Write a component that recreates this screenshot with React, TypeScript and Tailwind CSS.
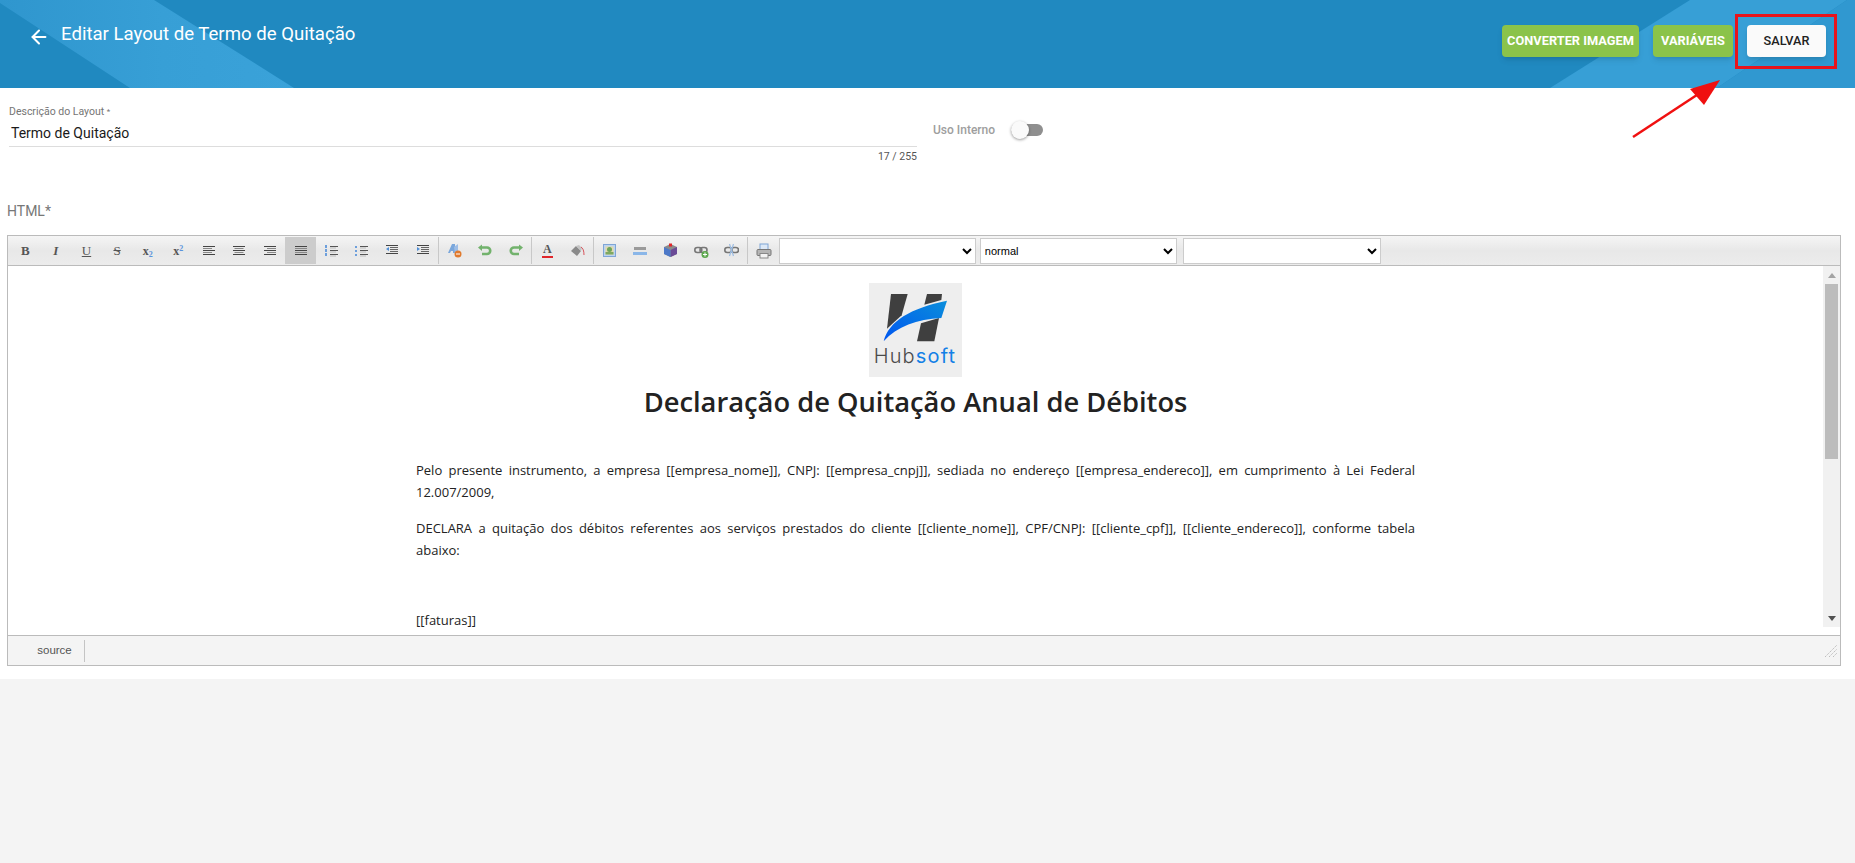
import { ArrowLeft } from 'lucide-react';

function HeaderShapes() {
  return (
    <svg className="absolute inset-0 h-full w-full" viewBox="0 0 1855 88" preserveAspectRatio="none">
      <defs>
        <linearGradient id="bandLeft" x1="0" x2="1" y1="0" y2="0">
          <stop offset="0" stopColor="#2f96ce" />
          <stop offset="0.55" stopColor="#379fd6" />
          <stop offset="1" stopColor="#3aa2d9" />
        </linearGradient>
      </defs>
      <polygon points="0,3 130,88 294,88 154,0 0,0" fill="url(#bandLeft)" />
      <polygon points="1690,0 1550,88 1717,88 1847,0" fill="#379fd6" />
      <polygon points="1847,0 1717,88 1855,88 1855,0" fill="#3098d0" />
    </svg>
  );
}

function Line({ w, x = 0, y, c = '#555' }: { w: number; x?: number; y: number; c?: string }) {
  return <rect x={x} y={y} width={w} height="1" fill={c} />;
}

function AlignIcon({ kind }: { kind: 'left' | 'center' | 'right' | 'justify' }) {
  const rows = [12, 9, 12, 9, 12];
  return (
    <svg width="12" height="10" viewBox="0 0 12 10">
      {rows.map((w, i) => {
        const width = kind === 'justify' ? 12 : w;
        const x = kind === 'left' || kind === 'justify' ? 0 : kind === 'center' ? (12 - width) / 2 : 12 - width;
        return <Line key={i} w={width} x={x} y={i * 2} c={i % 2 ? '#888' : '#444'} />;
      })}
    </svg>
  );
}

function ListIcon({ ordered }: { ordered?: boolean }) {
  return (
    <svg width="13" height="12" viewBox="0 0 13 12">
      {[1, 5, 9].map(y => (
        <g key={y}>
          <rect x="0" y={y - (ordered ? 1 : 0)} width="2" height={ordered ? 3 : 2} fill="#6d9fdc" />
          <Line w={8} x={5} y={y} c="#555" />
          <Line w={6} x={5} y={y + 1.5} c="#bbb" />
        </g>
      ))}
    </svg>
  );
}

function IndentIcon({ out }: { out?: boolean }) {
  return (
    <svg width="12" height="11" viewBox="0 0 12 11">
      <Line w={12} y={0} c="#444" />
      <Line w={8} x={4} y={2} c="#666" />
      <Line w={8} x={4} y={4} c="#666" />
      <Line w={8} x={4} y={6} c="#666" />
      <Line w={12} y={8} c="#444" />
      <polygon points={out ? '3,2 0,4 3,6' : '0,2 3,4 0,6'} fill="#4f8fd8" />
    </svg>
  );
}

function ClearFormatIcon() {
  return (
    <svg width="15" height="15" viewBox="0 0 15 15">
      <polygon points="1,10 5,1 8,1 8,10 6,10 6,8 4,8 3,10" fill="#7aa7dc" />
      <polygon points="7,4 11,1 11,11 8,11" fill="#9dbde6" />
      <circle cx="11" cy="11" r="3.5" fill="#e07a2e" />
      <rect x="9" y="10.5" width="4" height="1" fill="#fff" />
    </svg>
  );
}

function UndoIcon({ redo }: { redo?: boolean }) {
  return (
    <svg width="14" height="13" viewBox="0 0 14 13" className={redo ? '-scale-x-100' : ''}>
      <path d="M2 3.5h7a3 3 0 0 1 0 6.5H4" fill="none" stroke="#72b26c" strokeWidth="2.6" />
      <polygon points="4,0.5 4,7 0,3.5" fill="#72b26c" />
    </svg>
  );
}

function FontColorIcon() {
  return (
    <span className="flex h-[15px] w-[12px] flex-col items-center">
      <span className="font-['Liberation_Serif',serif] text-[12px] leading-[12px] font-bold text-[#555]">A</span>
      <span className="mt-px h-[2px] w-[11px] bg-[#e0262b]" />
    </span>
  );
}

function BgColorIcon() {
  return (
    <svg width="15" height="14" viewBox="0 0 15 14">
      <polygon points="1,7 6,2 11,7 7,12" fill="#8a8a8a" />
      <polygon points="6,2 9,1 12,4 11,7" fill="#c4c4c4" />
      <path d="M11 3c2 1 3 4 3 8" fill="none" stroke="#d8525a" strokeWidth="1" />
    </svg>
  );
}

function ImageIcon() {
  return (
    <svg width="13" height="13" viewBox="0 0 13 13">
      <rect x="0.5" y="0.5" width="12" height="12" fill="#bcd4f0" stroke="#7fa5d6" />
      <rect x="2.5" y="2.5" width="8" height="8" fill="#e3d9a8" />
      <circle cx="6.5" cy="5.5" r="2.5" fill="#6da45b" />
      <rect x="2.5" y="8" width="8" height="2.5" fill="#7fa860" />
    </svg>
  );
}

function RuleIcon() {
  return (
    <svg width="14" height="10" viewBox="0 0 14 10">
      <rect x="1" y="1" width="12" height="3" fill="#9a9a9a" />
      <rect x="0" y="6" width="14" height="3" fill="#8ab6e8" />
    </svg>
  );
}

function MediaIcon() {
  return (
    <svg width="15" height="15" viewBox="0 0 15 15">
      <polygon points="7.5,1 14,4 14,11 7.5,14 1,11 1,4" fill="#8b8b8b" />
      <polygon points="7.5,7 14,4 14,11 7.5,14" fill="#6a4a96" />
      <polygon points="1,4 7.5,7 7.5,14 1,11" fill="#4c78c8" />
      <rect x="6" y="0.5" width="3" height="3" fill="#e0262b" />
    </svg>
  );
}

function LinkIcon({ broken }: { broken?: boolean }) {
  return (
    <svg width="15" height="14" viewBox="0 0 15 14">
      <rect x="0.8" y="3.5" width="7" height="5" rx="2.5" fill="none" stroke="#777" strokeWidth="1.6" />
      <rect x={broken ? 7.5 : 6} y="3.5" width="7" height="5" rx="2.5" fill="none" stroke="#777" strokeWidth="1.6" />
      {broken ? (
        <path d="M5.5 0l4 12M9.5 0l-4 12" stroke="#9cbde4" strokeWidth="1.2" />
      ) : (
        <>
          <circle cx="11" cy="10.5" r="3.5" fill="#5da84e" />
          <path d="M9 10.5h4M11 8.5v4" stroke="#fff" strokeWidth="1" />
        </>
      )}
    </svg>
  );
}

function PrintIcon() {
  return (
    <svg width="16" height="16" viewBox="0 0 16 16">
      <rect x="4" y="1" width="8" height="6" fill="#dce8f6" stroke="#7fa5d6" />
      <rect x="1" y="6.5" width="14" height="6" rx="1" fill="#b5b5b5" stroke="#777" />
      <rect x="4" y="10.5" width="8" height="4.5" fill="#f3f3f3" stroke="#888" />
    </svg>
  );
}

function TextBtn({ className, children }: { className: string; children: React.ReactNode }) {
  return <span className={`font-['Liberation_Serif',serif] leading-none text-[#555] ${className}`}>{children}</span>;
}

function ToolBtn({ children, active }: { children: React.ReactNode; active?: boolean }) {
  return (
    <span className={`flex h-[27px] w-[30.6px] shrink-0 items-center justify-center ${active ? 'bg-[#cccccc]' : ''}`}>
      {children}
    </span>
  );
}

function Sep() {
  return <span className="h-[27px] w-px shrink-0 bg-[#c8c8c8]" />;
}

function ToolSelect({ width, value }: { width: string; value?: string }) {
  return (
    <select
      defaultValue={value ?? ''}
      className={`h-[26px] ${width} border border-[#cccccc] bg-white font-['Liberation_Sans',sans-serif] text-[11px] text-black`}
    >
      <option value="">{''}</option>
      <option value="normal">normal</option>
    </select>
  );
}

function Toolbar() {
  return (
    <div className="flex h-[30px] items-center border-b border-[#bbbbbb] bg-gradient-to-b from-[#f5f5f5] via-[#e8e8e8] to-[#ececec] pl-[2px]">
      <ToolBtn><TextBtn className="text-[13px] font-bold">B</TextBtn></ToolBtn>
      <ToolBtn><TextBtn className="text-[13px] font-bold italic">I</TextBtn></ToolBtn>
      <ToolBtn><TextBtn className="text-[13px] underline">U</TextBtn></ToolBtn>
      <ToolBtn><TextBtn className="text-[13px] line-through">S</TextBtn></ToolBtn>
      <ToolBtn>
        <TextBtn className="text-[12px] font-bold">x<sub className="text-[8px] text-[#5b93dc]">2</sub></TextBtn>
      </ToolBtn>
      <ToolBtn>
        <TextBtn className="text-[12px] font-bold">x<sup className="text-[8px] text-[#5b93dc]">2</sup></TextBtn>
      </ToolBtn>
      <ToolBtn><AlignIcon kind="left" /></ToolBtn>
      <ToolBtn><AlignIcon kind="center" /></ToolBtn>
      <ToolBtn><AlignIcon kind="right" /></ToolBtn>
      <ToolBtn active><AlignIcon kind="justify" /></ToolBtn>
      <ToolBtn><ListIcon ordered /></ToolBtn>
      <ToolBtn><ListIcon /></ToolBtn>
      <ToolBtn><IndentIcon out /></ToolBtn>
      <ToolBtn><IndentIcon /></ToolBtn>
      <Sep />
      <ToolBtn><ClearFormatIcon /></ToolBtn>
      <ToolBtn><UndoIcon /></ToolBtn>
      <ToolBtn><UndoIcon redo /></ToolBtn>
      <Sep />
      <ToolBtn><FontColorIcon /></ToolBtn>
      <ToolBtn><BgColorIcon /></ToolBtn>
      <Sep />
      <ToolBtn><ImageIcon /></ToolBtn>
      <ToolBtn><RuleIcon /></ToolBtn>
      <ToolBtn><MediaIcon /></ToolBtn>
      <ToolBtn><LinkIcon /></ToolBtn>
      <ToolBtn><LinkIcon broken /></ToolBtn>
      <Sep />
      <ToolBtn><PrintIcon /></ToolBtn>
      <div className="flex items-center gap-[4px]">
        <ToolSelect width="w-[197px]" />
        <ToolSelect width="w-[197px]" value="normal" />
        <ToolSelect width="ml-[2px] w-[198px]" />
      </div>
    </div>
  );
}

function Logo() {
  return (
    <svg width="93" height="94" viewBox="27 15 277 282" className="ml-[861px] block bg-[#eeeeee]">
      <defs>
        <linearGradient id="hubBlue" x1="0" x2="1" y1="1" y2="0">
          <stop offset="0" stopColor="#0056f0" />
          <stop offset="1" stopColor="#0a8edb" />
        </linearGradient>
      </defs>
      <polygon points="92,48 142,48 124,112 80,152" fill="#3f3f3f" />
      <polygon points="200,48 245,48 243,66 192,80" fill="#3f3f3f" />
      <polygon points="182,136 236,120 222,190 170,190" fill="#3f3f3f" />
      <path d="M70 190C85 130 150 90 260 68L243 120C170 124 110 145 70 190Z" fill="url(#hubBlue)" />
      <text x="40" y="255" fontFamily="Inter, sans-serif" fontSize="60" letterSpacing="3.5" fill="#4a4a4a" fontWeight="300">
        Hub<tspan fill="#1480e6" fontWeight="400">soft</tspan>
      </text>
    </svg>
  );
}

function Scrollbar() {
  return (
    <div className="flex h-[361px] w-[17px] shrink-0 flex-col items-center bg-[#f1f1f1]">
      <div className="flex h-[18px] items-center justify-center">
        <svg width="8" height="5" viewBox="0 0 8 5"><polygon points="4,0 8,5 0,5" fill="#a3a3a3" /></svg>
      </div>
      <div className="h-[175px] w-[13px] bg-[#bcbcbc]" />
      <div className="flex-1" />
      <div className="flex h-[18px] items-center justify-center">
        <svg width="8" height="5" viewBox="0 0 8 5"><polygon points="0,0 8,0 4,5" fill="#505050" /></svg>
      </div>
    </div>
  );
}

function Editor() {
  return (
    <div className="mx-[7px] w-[1834px] border border-[#bbbbbb] bg-white">
      <Toolbar />
      <div className="flex h-[370px] overflow-hidden border-b border-[#bbbbbb]">
        <div className="min-w-0 flex-1 overflow-hidden pt-[17px] font-['Open_Sans',sans-serif] text-[#222]">
          <Logo />
          <h1 className="mt-[6px] text-center text-[27.3px] leading-[38px] font-semibold">
            Declaração de Quitação Anual de Débitos
          </h1>
          <div className="mt-[38px] ml-[408px] w-[999px] text-justify text-[13px] leading-[22px]">
            <p>
              Pelo presente instrumento, a empresa [[empresa_nome]], CNPJ: [[empresa_cnpj]], sediada no endereço
              [[empresa_endereco]], em cumprimento à Lei Federal 12.007/2009,
            </p>
            <p className="mt-[14px]">
              DECLARA a quitação dos débitos referentes aos serviços prestados do cliente [[cliente_nome]], CPF/CNPJ:
              [[cliente_cpf]], [[cliente_endereco]], conforme tabela abaixo:
            </p>
            <p className="mt-[48px]">[[faturas]]</p>
          </div>
        </div>
        <Scrollbar />
      </div>
      <div className="flex h-[29px] items-center justify-between bg-[#f4f4f4]">
        <span className="flex h-[22px] w-[77px] items-center justify-center border-r border-[#c4c4c4] pl-[17px] font-['Liberation_Sans',sans-serif] text-[11.5px] text-[#555]">
          source
        </span>
        <svg width="12" height="12" viewBox="0 0 12 12" className="mr-[3px]">
          <path d="M0 12L12 0M4 12L12 4M8 12L12 8" stroke="#bdbdbd" strokeWidth="1" strokeDasharray="1.5 0.8" />
        </svg>
      </div>
    </div>
  );
}

export default function App() {
  return (
    <div className="relative min-h-[863px] bg-[#f4f4f4] font-['Roboto',sans-serif]">
      <header className="relative flex h-[88px] items-start justify-between overflow-hidden bg-[#2089c0]">
        <HeaderShapes />
        <div className="relative flex items-start pt-[21px] pl-[28px] text-white">
          <ArrowLeft className="mt-[5px] h-[22px] w-[22px]" strokeWidth={2.2} />
          <h1 className="ml-[11px] text-[18.6px] leading-[26px]">Editar Layout de Termo de Quitação</h1>
        </div>
        <div className="relative flex items-center gap-[14px] pt-[25px] pr-[29px]">
          <button className="h-[32px] w-[137px] rounded-[4px] bg-[#8bc34a] text-[12.8px] font-bold whitespace-nowrap text-white shadow-md">
            CONVERTER IMAGEM
          </button>
          <button className="h-[32px] w-[80px] rounded-[4px] bg-[#8bc34a] text-[12.8px] font-bold whitespace-nowrap text-white shadow-md">
            VARIÁVEIS
          </button>
          <button className="h-[32px] w-[79px] rounded-[4px] bg-[#fafafa] text-[12.7px] font-medium whitespace-nowrap text-[#212121] shadow-md">
            SALVAR
          </button>
        </div>
      </header>

      <main className="h-[591px] bg-white">
        <div className="flex items-start px-[9px] pt-[17px]">
          <div className="w-[908px]">
            <label className="block text-[10.5px] leading-[14px] text-[#757575]">
              Descrição do Layout <span className="align-top text-[8px]">*</span>
            </label>
            <div className="border-b border-[#dddddd] pt-[4px] pb-[3px] pl-[2px] text-[14px] leading-[20px] text-[#1a1a1a]">
              Termo de Quitação
            </div>
            <div className="pt-[3px] text-right text-[10.5px] leading-[14px] text-[#555]">17 / 255</div>
          </div>
          <div className="mt-[17px] ml-[16px] flex items-center">
            <span className="text-[12px] leading-[16px] font-medium text-[#9e9e9e]">Uso Interno</span>
            <span className="relative ml-[16px] block h-[12px] w-[32px] rounded-full bg-[#8f8f8f]">
              <span className="absolute top-[-3px] left-0 h-[18px] w-[18px] rounded-full bg-[#fafafa] shadow-[0_1px_3px_rgba(0,0,0,0.4)]" />
            </span>
          </div>
        </div>
        <div className="pt-[38px] pb-[15px] pl-[7px] text-[14px] leading-[18px] text-[#777777]">HTML*</div>
        <Editor />
      </main>

      {/* marcacao feita por cima da captura */}
      <div className="absolute top-[14px] left-[1735px] h-[55px] w-[102px] border-[3px] border-[#e8141c]" />
      <svg className="absolute top-[75px] left-[1628px]" width="100" height="68" viewBox="0 0 100 68">
        <line x1="5" y1="62" x2="78" y2="14" stroke="#f01010" strokeWidth="2.5" />
        <polygon points="92,5 62,14 76,30" fill="#f01010" />
      </svg>
    </div>
  );
}
